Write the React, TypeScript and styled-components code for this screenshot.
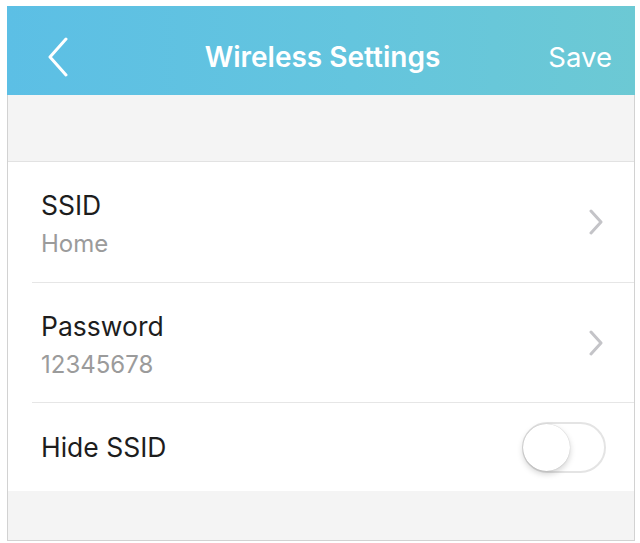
import React from "react";
import styled, { createGlobalStyle } from "styled-components";

const Global = createGlobalStyle`
  html, body { margin: 0; padding: 0; background: #ffffff; }
  body { font-family: Inter, "Helvetica Neue", Arial, sans-serif; }
`;

const Frame = styled.div`
  box-sizing: border-box;
  margin: 6px 0 0 7px;
  width: 628px;
  height: 535px;
  border: 1px solid #d2d2d2;
  border-top: none;
  background: #f4f4f4;
  display: flex;
  flex-direction: column;
`;

const Header = styled.header`
  box-sizing: border-box;
  height: 89px;
  margin: 0 -1px;
  padding: 12px 23px 0 40px;
  background: linear-gradient(90deg, #5cbfe5 0%, #64c5de 55%, #6cc9d4 100%);
  display: grid;
  grid-template-columns: 1fr auto 1fr;
  align-items: center;
  color: #ffffff;
`;

const BackButton = styled.button`
  justify-self: start;
  background: none;
  border: none;
  padding: 0;
  display: flex;
  cursor: pointer;
`;

const Title = styled.h1`
  margin: 0 0 0 -14px;
  font-size: 28px;
  font-weight: 600;
  letter-spacing: 0px;
`;

const SaveButton = styled.button`
  justify-self: end;
  background: none;
  border: none;
  padding: 0;
  color: #ffffff;
  font-family: inherit;
  font-size: 27.5px;
  font-weight: 400;
  cursor: pointer;
`;

const Spacer = styled.div`
  height: 66px;
  border-bottom: 1px solid #e2e2e2;
`;

const List = styled.div`
  background: #ffffff;
  display: flex;
  flex-direction: column;
`;

const Row = styled.div<{ $h: number; $last?: boolean }>`
  box-sizing: border-box;
  height: ${(p) => p.$h}px;
  margin-left: 24px;
  padding: 0 30px 0 9px;
  display: flex;
  align-items: center;
  justify-content: space-between;
  border-bottom: ${(p) => (p.$last ? "none" : "1px solid #e6e6e6")};
`;

const Texts = styled.div`
  display: flex;
  flex-direction: column;
  gap: 8px;
  padding-top: 4px;
`;

const Label = styled.div`
  font-size: 26.5px;
  color: #1d1d1d;
  line-height: 32px;
`;

const Value = styled.div`
  font-size: 24px;
  color: #9b9b9b;
  line-height: 30px;
`;

const Toggle = styled.div`
  position: relative;
  box-sizing: border-box;
  width: 84px;
  height: 51px;
  margin-right: -2px;
  border-radius: 26px;
  border: 2px solid #e4e4e4;
  background: #ffffff;
`;

const Knob = styled.span`
  position: absolute;
  left: -1px;
  top: 0;
  width: 47px;
  height: 47px;
  border-radius: 50%;
  background: #ffffff;
  box-shadow: 0 3px 6px rgba(0, 0, 0, 0.18), 0 0 1px rgba(0, 0, 0, 0.25);
`;

const Chevron = () => (
  <svg width="16" height="26" viewBox="0 0 16 26">
    <path d="M3 2 L13 13 L3 24" fill="none" stroke="#c4c4c8" strokeWidth="3" strokeLinecap="round" strokeLinejoin="round" />
  </svg>
);

export default function App() {
  return (
    <>
      <Global />
      <Frame>
        <Header>
          <BackButton aria-label="Back">
            <svg width="22" height="40" viewBox="0 0 22 40">
              <path d="M19 2 L3 20 L19 38" fill="none" stroke="#ffffff" strokeWidth="3" strokeLinecap="round" strokeLinejoin="round" />
            </svg>
          </BackButton>
          <Title>Wireless Settings</Title>
          <SaveButton>Save</SaveButton>
        </Header>
        <Spacer />
        <List>
          <Row $h={121}>
            <Texts>
              <Label>SSID</Label>
              <Value>Home</Value>
            </Texts>
            <Chevron />
          </Row>
          <Row $h={120}>
            <Texts>
              <Label>Password</Label>
              <Value>12345678</Value>
            </Texts>
            <Chevron />
          </Row>
          <Row $h={88} $last>
            <Label>Hide SSID</Label>
            <Toggle>
              <Knob />
            </Toggle>
          </Row>
        </List>
      </Frame>
    </>
  );
}
